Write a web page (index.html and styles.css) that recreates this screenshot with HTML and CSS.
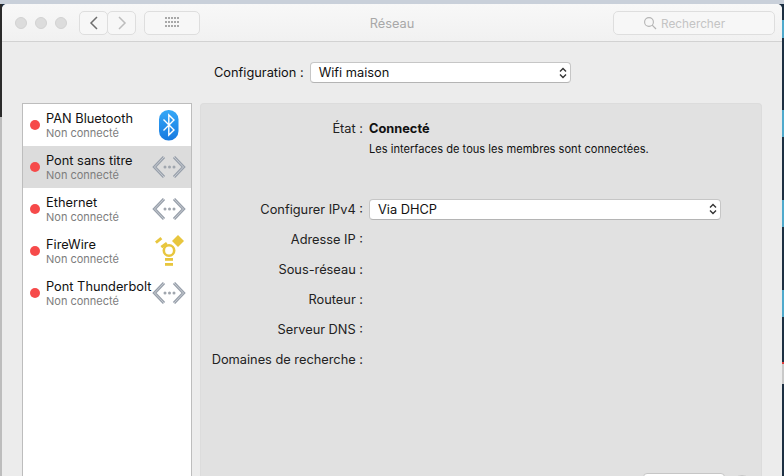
FILE: index.html
```html
<!DOCTYPE html>
<html lang="fr">
<head>
<meta charset="utf-8">
<title>Réseau</title>
<link rel="stylesheet" href="styles.css">
</head>
<body>
<div class="window">
  <header class="titlebar">
    <div class="lights"><span class="light"></span><span class="light"></span><span class="light"></span></div>
    <div class="nav">
      <span class="nav-btn"><svg width="10" height="14" viewBox="0 0 10 14"><path d="M8 1 2 7l6 6" fill="none" stroke="#6e6e6e" stroke-width="1.5"/></svg></span>
      <span class="nav-btn"><svg width="10" height="14" viewBox="0 0 10 14"><path d="M2 1l6 6-6 6" fill="none" stroke="#bdbdbd" stroke-width="1.5"/></svg></span>
    </div>
    <span class="grid-btn"><svg width="15" height="11" viewBox="0 0 15 11" fill="#a8a8a8"><rect x="0" y="0" width="2" height="2"/><rect x="3" y="0" width="2" height="2"/><rect x="6" y="0" width="2" height="2"/><rect x="9" y="0" width="2" height="2"/><rect x="12" y="0" width="2" height="2"/><rect x="0" y="4" width="2" height="2"/><rect x="3" y="4" width="2" height="2"/><rect x="6" y="4" width="2" height="2"/><rect x="9" y="4" width="2" height="2"/><rect x="12" y="4" width="2" height="2"/><rect x="0" y="8" width="2" height="2"/><rect x="3" y="8" width="2" height="2"/><rect x="6" y="8" width="2" height="2"/><rect x="9" y="8" width="2" height="2"/><rect x="12" y="8" width="2" height="2"/></svg></span>
    <h1 class="title">Réseau</h1>
    <div class="search"><svg width="14" height="14" viewBox="0 0 14 14"><circle cx="6" cy="6" r="4.4" fill="none" stroke="#b4b4b4" stroke-width="1.1"/><path d="M9.2 9.2 13 13" stroke="#b4b4b4" stroke-width="1.2"/></svg><span class="search-text">Rechercher</span></div>
  </header>
  <main class="content">
    <div class="config">
      <span class="config-label">Configuration :</span>
      <div class="select config-select"><span>Wifi maison</span><svg class="updown" width="8" height="12" viewBox="0 0 8 12"><path d="M1 4.500 4 1.500l3 3M1 7.500l3 3 3-3" fill="none" stroke="#333" stroke-width="1.400"/></svg></div>
    </div>
    <div class="columns">
      <ul class="list">
        <li class="item">
          <span class="dot"></span>
          <div class="names"><div class="name">PAN Bluetooth</div><div class="status">Non connecté</div></div>
          <svg class="icon" width="34" height="34" viewBox="0 0 34 34"><defs><linearGradient id="bt" x1="0" y1="0" x2="0" y2="1"><stop offset="0" stop-color="#35a8f7"/><stop offset="1" stop-color="#1679e0"/></linearGradient></defs><rect x="7" y="2" width="19.500" height="30.500" rx="9.500" fill="url(#bt)"/><path d="M11.500 11.500 22 22l-5.200 5V7L22 12 11.500 22.500" fill="none" stroke="#fff" stroke-width="1.400"/></svg>
        </li>
        <li class="item selected">
          <span class="dot"></span>
          <div class="names"><div class="name">Pont sans titre</div><div class="status">Non connecté</div></div>
          <svg class="icon" width="34" height="34" viewBox="0 0 34 34"><use href="#bridge"/></svg>
        </li>
        <li class="item">
          <span class="dot"></span>
          <div class="names"><div class="name">Ethernet</div><div class="status">Non connecté</div></div>
          <svg class="icon" width="34" height="34" viewBox="0 0 34 34"><use href="#bridge"/></svg>
        </li>
        <li class="item">
          <span class="dot"></span>
          <div class="names"><div class="name">FireWire</div><div class="status">Non connecté</div></div>
          <svg class="icon" width="34" height="34" viewBox="0 0 34 34"><g fill="#e8c63e"><path d="M3 7.500 8.500 3l1.800 2.200L4.800 9.700z"/><path d="M8.500 12 14 8l1.700 2.200L10.200 14.200z"/><path d="M26 1 32 7 26 13 20 7z"/><rect x="13" y="24" width="8" height="2.800"/><rect x="13" y="29" width="8" height="2.800"/></g><circle cx="17" cy="16.500" r="5.200" fill="none" stroke="#e8c63e" stroke-width="2.600"/></svg>
        </li>
        <li class="item">
          <span class="dot"></span>
          <div class="names"><div class="name">Pont Thunderbolt</div><div class="status">Non connecté</div></div>
          <svg class="icon" width="34" height="34" viewBox="0 0 34 34"><use href="#bridge"/></svg>
        </li>
      </ul>
      <section class="panel">
        <div class="form">
          <span class="label">État :</span><strong class="value-strong">Connecté</strong>
          <span class="desc">Les interfaces de tous les membres sont connectées.</span>
          <span class="label">Configurer IPv4 :</span>
          <div class="select ipv4-select"><span>Via DHCP</span><svg class="updown" width="8" height="12" viewBox="0 0 8 12"><path d="M1 4.500 4 1.500l3 3M1 7.500l3 3 3-3" fill="none" stroke="#333" stroke-width="1.400"/></svg></div>
          <span class="label full">Adresse IP :</span>
          <span class="label full">Sous-réseau :</span>
          <span class="label full">Routeur :</span>
          <span class="label full">Serveur DNS :</span>
          <span class="label full">Domaines de recherche :</span>
        </div>
        <div class="bottom"><span class="adv"></span><span class="help"></span></div>
      </section>
    </div>
  </main>
</div>
<svg class="defs" width="0" height="0"><defs><g id="bridge"><path d="M12 7 2.500 17 12 27M22 7 31.500 17 22 27" fill="none" stroke="#98a0ab" stroke-width="3.200"/><path d="M12 7 2.500 17 12 27M22 7 31.500 17 22 27" fill="none" stroke="#c9cdd3" stroke-width="1"/><circle cx="13" cy="17" r="1.500" fill="#a0a6ae"/><circle cx="17.500" cy="17" r="1.500" fill="#a0a6ae"/><circle cx="22" cy="17" r="1.500" fill="#a0a6ae"/></g></defs></svg>
</body>
</html>
```
FILE: styles.css
```css
* { box-sizing: border-box; }
html, body { margin: 0; height: 100%; }
body {
  width: 784px;
  height: 476px;
  overflow: hidden;
  background:
    linear-gradient(#c9d0da 0, #c9d0da 4px, transparent 4px),
    linear-gradient(90deg, #bdbdbd 0, #bdbdbd 2px, #1c2f42 2px);
  font-family: Inter, "Liberation Sans", sans-serif;
  color: #1a1a1a;
  padding: 4px 2px 0 2px;
  position: relative;
}
body::before {
  content: "";
  position: absolute;
  left: 0; top: 4px;
  width: 2px; height: 113px;
  background: #2b2b2b;
}
body::after {
  content: "";
  position: absolute;
  right: 0; top: 4px;
  width: 2px; height: 472px;
  background: linear-gradient(#1c2f42 0, #1c2f42 16px, #4fa9cc 16px, #4fa9cc 34px, #1c2f42 34px, #1c2f42 106px, #4fa9cc 106px, #4fa9cc 133px, #1c2f42 133px, #1c2f42 196px, #4fa9cc 196px, #4fa9cc 223px, #1c2f42 223px, #1c2f42 286px, #4fa9cc 286px, #4fa9cc 313px, #1c2f42 313px, #1c2f42 358px, #e03a3a 358px, #e03a3a 360px, #c9c9c9 360px, #c9c9c9 380px, #1c2f42 380px);
}
.window {
  position: relative;
  height: 472px;
  background: #ececec;
  border-radius: 5px 5px 0 0;
  overflow: hidden;
  display: flex;
  flex-direction: column;
}
.titlebar {
  height: 38px;
  flex: none;
  display: flex;
  align-items: center;
  padding: 0 0 0 13px;
  background: linear-gradient(#f8f8f8, #f1f1f1);
  border-bottom: 1px solid #d2d2d2;
  position: relative;
}
.lights { display: flex; gap: 8px; margin-right: 12px; }
.light { width: 12px; height: 12px; border-radius: 50%; background: #dcdcdc; border: 1px solid #d2d2d2; }
.nav { display: flex; }
.nav-btn {
  width: 29px; height: 24px;
  display: flex; align-items: center; justify-content: center;
  border: 1px solid #dedede;
  border-radius: 5px;
  background: #f7f7f7;
}
.nav-btn + .nav-btn { margin-left: -1px; }
.grid-btn {
  width: 56px; height: 24px;
  margin-left: 8px;
  display: flex; align-items: center; justify-content: center;
  border: 1px solid #dedede;
  border-radius: 5px;
  background: #f7f7f7;
}
.title {
  position: absolute;
  left: 0; right: 0; top: 2px; bottom: 0;
  margin: 0;
  display: flex; align-items: center; justify-content: center;
  font-size: 12.8px;
  font-weight: 400;
  color: #a8a8a8;
}
.search {
  position: absolute;
  left: 611px; top: 7px;
  width: 162px; height: 24px;
  display: flex; align-items: center;
  padding-left: 29px;
  gap: 4px;
  border: 1px solid #dedede;
  border-radius: 5px;
  background: #f7f7f7;
  color: #c4c4c4;
  font-size: 11.8px;
}
.search-text { padding-top: 1px; }
.content { flex: 1; display: flex; flex-direction: column; min-height: 0; padding: 20px 20px 0; }
.config { display: flex; align-items: center; height: 21px; padding-left: 192px; gap: 6px; }
.config-label { font-size: 12.8px; color: #111; }
.select {
  display: flex; align-items: center; justify-content: space-between;
  height: 21px;
  background: #fff;
  border: 1px solid #c6c6c6;
  border-bottom-color: #b4b4b4;
  border-radius: 4px;
  font-size: 12.8px;
  color: #111;
  padding: 0 3px 0 8px;
}
.config-select { width: 261px; }
.columns { flex: 1; display: flex; gap: 8px; margin-top: 20px; min-height: 0; }
.list {
  width: 170px; flex: none;
  margin: 0; padding: 0;
  list-style: none;
  background: #fff;
  border: 1px solid #bdbdbd;
  border-bottom: 0;
}
.item { height: 42px; display: flex; align-items: center; padding-left: 7px; position: relative; }
.item.selected { background: #dcdcdc; }
.dot { width: 10px; height: 10px; border-radius: 50%; background: #f64a4a; flex: none; margin-right: 6px; }
.names { flex: 1; min-width: 0; }
.name { font-size: 12.8px; line-height: 15px; color: #111; white-space: nowrap; }
.status { font-size: 11px; line-height: 14px; color: #7d7d7d; white-space: nowrap; }
.icon { position: absolute; right: 5px; top: 4px; }
.panel {
  width: 562px; flex: none;
  background: #e1e1e1;
  border: 1px solid #dcdcdc;
  border-bottom: 0;
  border-radius: 4px 4px 0 0;
  position: relative;
}
.form {
  display: grid;
  grid-template-columns: 162px 352px;
  grid-template-rows: 30px 51px;
  column-gap: 6px;
  grid-auto-rows: 30px;
  padding-top: 9px;
  align-items: center;
}
.label { text-align: right; font-size: 12.8px; color: #222; white-space: nowrap; }
.full { grid-column: 1; }
.value-strong { font-size: 12.8px; font-weight: 700; color: #111; }
.desc { grid-column: 2; font-size: 11.1px; line-height: 13px; color: #111; align-self: start; white-space: nowrap; }
.ipv4-select { width: 352px; }
.bottom { position: absolute; left: 442px; top: 369px; display: flex; gap: 7px; }
.adv { width: 82px; height: 22px; background: #fff; border: 1px solid #c6c6c6; border-radius: 4px; }
.help { width: 20px; height: 20px; margin-top: 2px; border-radius: 50%; background: #f0f0f0; border: 1px solid #c6c6c6; }
.defs { position: absolute; }
```
